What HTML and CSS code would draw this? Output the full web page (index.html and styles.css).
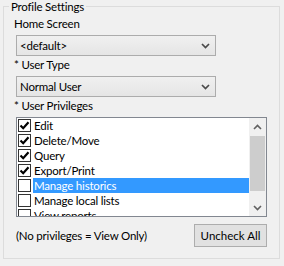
FILE: index.html
```html
<!DOCTYPE html>
<html lang="en">
<head>
  <meta charset="UTF-8" />
  <title>Profile Settings</title>
  <link rel="stylesheet" href="styles.css">
</head>
<body>
  <fieldset class="group">
    <legend>Profile Settings</legend>

    <div class="label">Home Screen</div>
    <div class="combo">
      <span>&lt;default&gt;</span>
      <svg width="9" height="6" viewBox="0 0 9 6"><path d="M1 1 L4.5 4.5 L8 1" fill="none" stroke="#4a4a4a" stroke-width="1.7"/></svg>
    </div>

    <div class="label">* User Type</div>
    <div class="combo">
      <span>Normal User</span>
      <svg width="9" height="6" viewBox="0 0 9 6"><path d="M1 1 L4.5 4.5 L8 1" fill="none" stroke="#4a4a4a" stroke-width="1.7"/></svg>
    </div>

    <div class="label">* User Privileges</div>
    <div class="listbox">
      <ul class="items">
        <li class="item"><span class="check on"><svg width="11" height="11" viewBox="0 0 11 11"><path d="M1.5 5.5 L4.2 8.2 L9.5 2.2" fill="none" stroke="#000" stroke-width="2.2"/></svg></span><span class="text">Edit</span></li>
        <li class="item"><span class="check on"><svg width="11" height="11" viewBox="0 0 11 11"><path d="M1.5 5.5 L4.2 8.2 L9.5 2.2" fill="none" stroke="#000" stroke-width="2.2"/></svg></span><span class="text">Delete/Move</span></li>
        <li class="item"><span class="check on"><svg width="11" height="11" viewBox="0 0 11 11"><path d="M1.5 5.5 L4.2 8.2 L9.5 2.2" fill="none" stroke="#000" stroke-width="2.2"/></svg></span><span class="text">Query</span></li>
        <li class="item"><span class="check on"><svg width="11" height="11" viewBox="0 0 11 11"><path d="M1.5 5.5 L4.2 8.2 L9.5 2.2" fill="none" stroke="#000" stroke-width="2.2"/></svg></span><span class="text">Export/Print</span></li>
        <li class="item selected"><span class="check"></span><span class="text">Manage historics</span></li>
        <li class="item"><span class="check"></span><span class="text">Manage local lists</span></li>
        <li class="item"><span class="check"></span><span class="text">View reports</span></li>
      </ul>
      <div class="scrollbar">
        <div class="arrow"><svg width="9" height="6" viewBox="0 0 9 6"><path d="M1 5 L4.5 1.5 L8 5" fill="none" stroke="#606060" stroke-width="1.6"/></svg></div>
        <div class="track"><div class="thumb"></div></div>
        <div class="arrow"><svg width="9" height="6" viewBox="0 0 9 6"><path d="M1 1 L4.5 4.5 L8 1" fill="none" stroke="#606060" stroke-width="1.6"/></svg></div>
      </div>
    </div>

    <div class="footer">
      <span>(No privileges = View Only)</span>
      <button>Uncheck All</button>
    </div>
  </fieldset>
</body>
</html>
```

FILE: styles.css
```css
body {
  margin: 0;
  background-color: #f0f0f0;
  font-family: Lato, "Liberation Sans", sans-serif;
  font-size: 11.5px;
  letter-spacing: -0.2px;
  color: #000;
}

.group {
  margin: 0 4px 0 3px;
  padding: 3px 0 11px 10px;
  border: 1px solid #dcdcdc;
}

.group legend {
  line-height: 13px;
  padding: 0 2px;
  margin-left: -5px;
}

.label {
  line-height: 16px;
}

.combo {
  box-sizing: border-box;
  width: 200px;
  height: 21px;
  margin: 3px 0 1px 2px;
  padding: 0 5px 0 3px;
  border: 1px solid #acacac;
  background: linear-gradient(#f0f0f0, #e5e5e5);
  display: flex;
  align-items: center;
  justify-content: space-between;
}

.listbox {
  box-sizing: border-box;
  width: 251px;
  height: 100px;
  margin: 3px 0 0 2px;
  border: 1px solid #828790;
  background-color: #fff;
  display: flex;
  overflow: hidden;
}

.items {
  flex: 1;
  list-style: none;
  margin: 0;
  padding: 0;
}

.item {
  height: 15px;
  display: flex;
  align-items: center;
}

.check {
  box-sizing: border-box;
  width: 13px;
  height: 13px;
  margin: 0 2px 0 1px;
  border: 1px solid #333;
  background-color: #fff;
  display: flex;
  align-items: center;
  justify-content: center;
}

.text {
  flex: 1;
  height: 15px;
  line-height: 15px;
  padding-left: 1px;
  white-space: nowrap;
}

.item.selected .text {
  background-color: #3399ff;
  color: #fff;
}

.scrollbar {
  width: 17px;
  background-color: #f0f0f0;
  display: flex;
  flex-direction: column;
}

.arrow {
  height: 17px;
  display: flex;
  align-items: center;
  justify-content: center;
}

.track {
  flex: 1;
  padding-top: 1px;
}

.thumb {
  height: 55px;
  margin: 0 1px;
  background-color: #cdcdcd;
}

.footer {
  width: 251px;
  margin: 7px 0 0 2px;
  display: flex;
  align-items: center;
  justify-content: space-between;
}

.footer button {
  width: 73px;
  height: 23px;
  padding: 0;
  border: 1px solid #adadad;
  background-color: #e1e1e1;
  font: inherit;
  color: #000;
}
```
